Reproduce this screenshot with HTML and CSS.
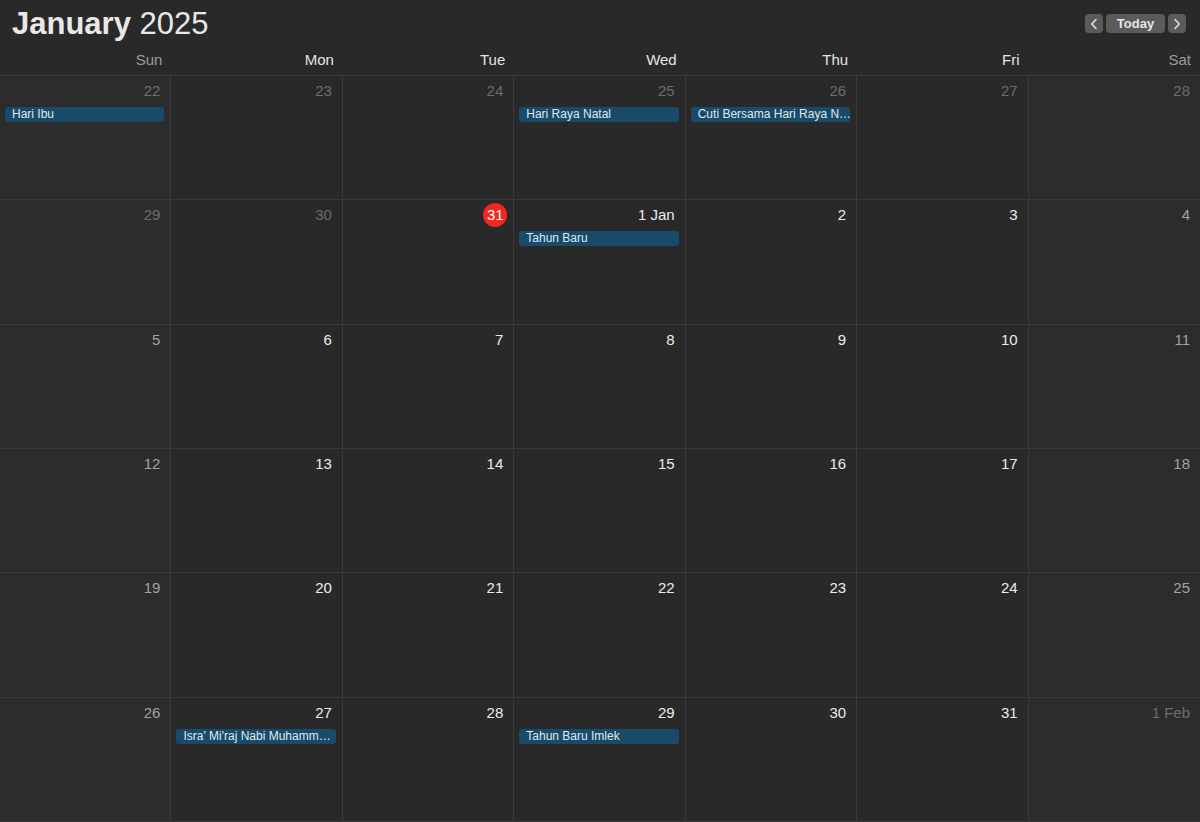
FILE: index.html
```html
<!DOCTYPE html>
<html lang="id">
<head>
<meta charset="utf-8">
<title>January 2025</title>
<link rel="stylesheet" href="styles.css">
</head>
<body>
<div class="app">
  <header class="topbar">
    <h1 class="title"><b>January</b> 2025</h1>
    <div class="nav">
      <button class="btn arrow" aria-label="Previous"><svg width="8" height="12" viewBox="0 0 8 12"><path d="M6 1.5 L1.8 6 L6 10.5" fill="none" stroke="#e6e6e6" stroke-width="1.5" stroke-linecap="round" stroke-linejoin="round"/></svg></button>
      <button class="btn today">Today</button>
      <button class="btn arrow" aria-label="Next"><svg width="8" height="12" viewBox="0 0 8 12"><path d="M2 1.5 L6.2 6 L2 10.5" fill="none" stroke="#e6e6e6" stroke-width="1.5" stroke-linecap="round" stroke-linejoin="round"/></svg></button>
    </div>
  </header>
  <div class="weekdays">
    <div class="wd weekend">Sun</div>
    <div class="wd">Mon</div>
    <div class="wd">Tue</div>
    <div class="wd">Wed</div>
    <div class="wd">Thu</div>
    <div class="wd">Fri</div>
    <div class="wd weekend">Sat</div>
  </div>
  <div class="grid">
    <div class="cell we"><div class="date other">22</div><div class="event">Hari Ibu</div></div>
    <div class="cell"><div class="date other">23</div></div>
    <div class="cell"><div class="date other">24</div></div>
    <div class="cell"><div class="date other">25</div><div class="event">Hari Raya Natal</div></div>
    <div class="cell"><div class="date other">26</div><div class="event">Cuti Bersama Hari Raya N…</div></div>
    <div class="cell"><div class="date other">27</div></div>
    <div class="cell we"><div class="date other">28</div></div>

    <div class="cell we"><div class="date other">29</div></div>
    <div class="cell"><div class="date other">30</div></div>
    <div class="cell"><div class="date"><span class="todaymark">31</span></div></div>
    <div class="cell"><div class="date">1 Jan</div><div class="event">Tahun Baru</div></div>
    <div class="cell"><div class="date">2</div></div>
    <div class="cell"><div class="date">3</div></div>
    <div class="cell we"><div class="date wkd">4</div></div>

    <div class="cell we"><div class="date wkd">5</div></div>
    <div class="cell"><div class="date">6</div></div>
    <div class="cell"><div class="date">7</div></div>
    <div class="cell"><div class="date">8</div></div>
    <div class="cell"><div class="date">9</div></div>
    <div class="cell"><div class="date">10</div></div>
    <div class="cell we"><div class="date wkd">11</div></div>

    <div class="cell we"><div class="date wkd">12</div></div>
    <div class="cell"><div class="date">13</div></div>
    <div class="cell"><div class="date">14</div></div>
    <div class="cell"><div class="date">15</div></div>
    <div class="cell"><div class="date">16</div></div>
    <div class="cell"><div class="date">17</div></div>
    <div class="cell we"><div class="date wkd">18</div></div>

    <div class="cell we"><div class="date wkd">19</div></div>
    <div class="cell"><div class="date">20</div></div>
    <div class="cell"><div class="date">21</div></div>
    <div class="cell"><div class="date">22</div></div>
    <div class="cell"><div class="date">23</div></div>
    <div class="cell"><div class="date">24</div></div>
    <div class="cell we"><div class="date wkd">25</div></div>

    <div class="cell we"><div class="date wkd">26</div></div>
    <div class="cell"><div class="date">27</div><div class="event">Isra' Mi'raj Nabi Muhamm…</div></div>
    <div class="cell"><div class="date">28</div></div>
    <div class="cell"><div class="date">29</div><div class="event">Tahun Baru Imlek</div></div>
    <div class="cell"><div class="date">30</div></div>
    <div class="cell"><div class="date">31</div></div>
    <div class="cell we"><div class="date other">1 Feb</div></div>
  </div>
</div>
</body>
</html>
```
FILE: styles.css
```css
* { box-sizing: border-box; }
html, body {
  margin: 0;
  padding: 0;
  background: #292929;
  width: 1200px;
  height: 822px;
  overflow: hidden;
  font-family: "Liberation Sans", Arial, sans-serif;
  color: #e6e6e6;
}
.app {
  display: flex;
  flex-direction: column;
  height: 822px;
}
.topbar {
  height: 44px;
  display: flex;
  justify-content: space-between;
  align-items: flex-start;
  padding: 0 14px 0 12px;
}
.title {
  margin: 5px 0 0;
  font-size: 31px;
  font-weight: normal;
  line-height: 37px;
  color: #e8e8e8;
}
.title b { font-weight: bold; }
.nav {
  display: flex;
  gap: 2px;
  margin-top: 14px;
}
.btn {
  height: 19px;
  border: none;
  border-radius: 4px;
  background: #5b5b5b;
  color: #e6e6e6;
  font-family: inherit;
  padding: 0;
  display: flex;
  align-items: center;
  justify-content: center;
}
.arrow { width: 18px; }
.today {
  width: 59px;
  font-size: 13px;
  font-weight: bold;
  margin: 0 1px;
}
.weekdays {
  height: 32px;
  display: grid;
  grid-template-columns: repeat(7, 1fr);
  border-bottom: 1px solid #3b3b3b;
}
.wd {
  text-align: right;
  padding: 6px 9px 0 0;
  font-size: 15px;
  line-height: 20px;
  color: #e4e4e4;
}
.wd.weekend { color: #9c9c9c; }
.grid {
  flex: 1;
  display: grid;
  grid-template-columns: repeat(7, 1fr);
  grid-template-rows: repeat(6, 1fr);
}
.cell {
  border-right: 1px solid #3a3a3a;
  border-bottom: 1px solid #3a3a3a;
  padding: 4px 5px 0 5px;
  min-width: 0;
  background: #292929;
}
.cell:nth-child(7n) { border-right: none; }
.cell.we { background: #2c2c2c; }
.date {
  text-align: right;
  font-size: 15px;
  line-height: 22px;
  height: 22px;
  padding-right: 5px;
  color: #ececec;
}
.date.wkd { color: #a2a2a2; }
.date.other { color: #6c6c6c; }
.todaymark {
  display: inline-block;
  width: 24px;
  height: 24px;
  border-radius: 50%;
  background: #f0281e;
  color: #fff;
  text-align: center;
  line-height: 24px;
  font-size: 15px;
  margin-right: -4px;
  margin-top: -1px;
}
.event {
  margin-top: 5px;
  margin-right: 1px;
  height: 15px;
  line-height: 15px;
  border-radius: 3px;
  background: #1a4a69;
  color: #dceaf3;
  font-size: 12px;
  padding: 0 4px 0 7px;
  white-space: nowrap;
}
```
